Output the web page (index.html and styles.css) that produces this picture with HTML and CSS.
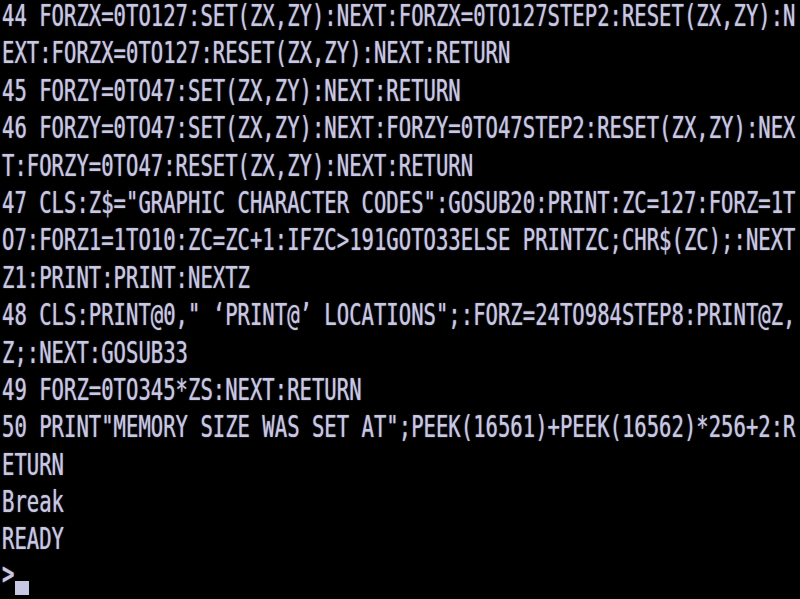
FILE: index.html
```html
<!DOCTYPE html>
<html>
<head>
<meta charset="utf-8">
<link rel="stylesheet" href="styles.css">
</head>
<body>
<div class="screen">
<div class="line"><span class="txt">44 FORZX=0TO127:SET(ZX,ZY):NEXT:FORZX=0TO127STEP2:RESET(ZX,ZY):N</span></div>
<div class="line"><span class="txt">EXT:FORZX=0TO127:RESET(ZX,ZY):NEXT:RETURN</span></div>
<div class="line"><span class="txt">45 FORZY=0TO47:SET(ZX,ZY):NEXT:RETURN</span></div>
<div class="line"><span class="txt">46 FORZY=0TO47:SET(ZX,ZY):NEXT:FORZY=0TO47STEP2:RESET(ZX,ZY):NEX</span></div>
<div class="line"><span class="txt">T:FORZY=0TO47:RESET(ZX,ZY):NEXT:RETURN</span></div>
<div class="line"><span class="txt">47 CLS:Z$="GRAPHIC CHARACTER CODES":GOSUB20:PRINT:ZC=127:FORZ=1T</span></div>
<div class="line"><span class="txt">O7:FORZ1=1TO10:ZC=ZC+1:IFZC&gt;191GOTO33ELSE PRINTZC;CHR$(ZC);:NEXT</span></div>
<div class="line"><span class="txt">Z1:PRINT:PRINT:NEXTZ</span></div>
<div class="line"><span class="txt">48 CLS:PRINT@0," ‘PRINT@’ LOCATIONS";:FORZ=24TO984STEP8:PRINT@Z,</span></div>
<div class="line"><span class="txt">Z;:NEXT:GOSUB33</span></div>
<div class="line"><span class="txt">49 FORZ=0TO345*ZS:NEXT:RETURN</span></div>
<div class="line"><span class="txt">50 PRINT"MEMORY SIZE WAS SET AT";PEEK(16561)+PEEK(16562)*256+2:R</span></div>
<div class="line"><span class="txt">ETURN</span></div>
<div class="line"><span class="txt">Break</span></div>
<div class="line"><span class="txt">READY</span></div>
<div class="line prompt"><span class="txt caret">&gt;</span><div class="cursor"></div></div>
</div>
</body>
</html>
```
FILE: styles.css
```css
html, body {
  margin: 0;
  padding: 0;
  background: #000;
  width: 800px;
  height: 599px;
  overflow: hidden;
}
.screen {
  display: flex;
  flex-direction: column;
  padding: 0 0 0 2px;
  font-family: "DejaVu Sans Mono", "Liberation Mono", monospace;
  font-size: 20.6px;
  line-height: 20.6px;
  color: #c8c8e4;
}
.line {
  height: 37.4px;
  flex: none;
  white-space: pre;
}
.txt {
  display: inline-block;
  transform: scaleY(1.5);
  transform-origin: 0 0;
  text-shadow: 0 0 1px rgba(200, 200, 228, 0.7);
}
.prompt {
  display: flex;
  align-items: flex-start;
}
.caret {
  width: 12.4px;
  margin-top: -3px;
  font-weight: bold;
}
.cursor {
  width: 14px;
  height: 14px;
  margin-top: 20px;
  margin-left: 1px;
  background: #c8c8e4;
}
```
